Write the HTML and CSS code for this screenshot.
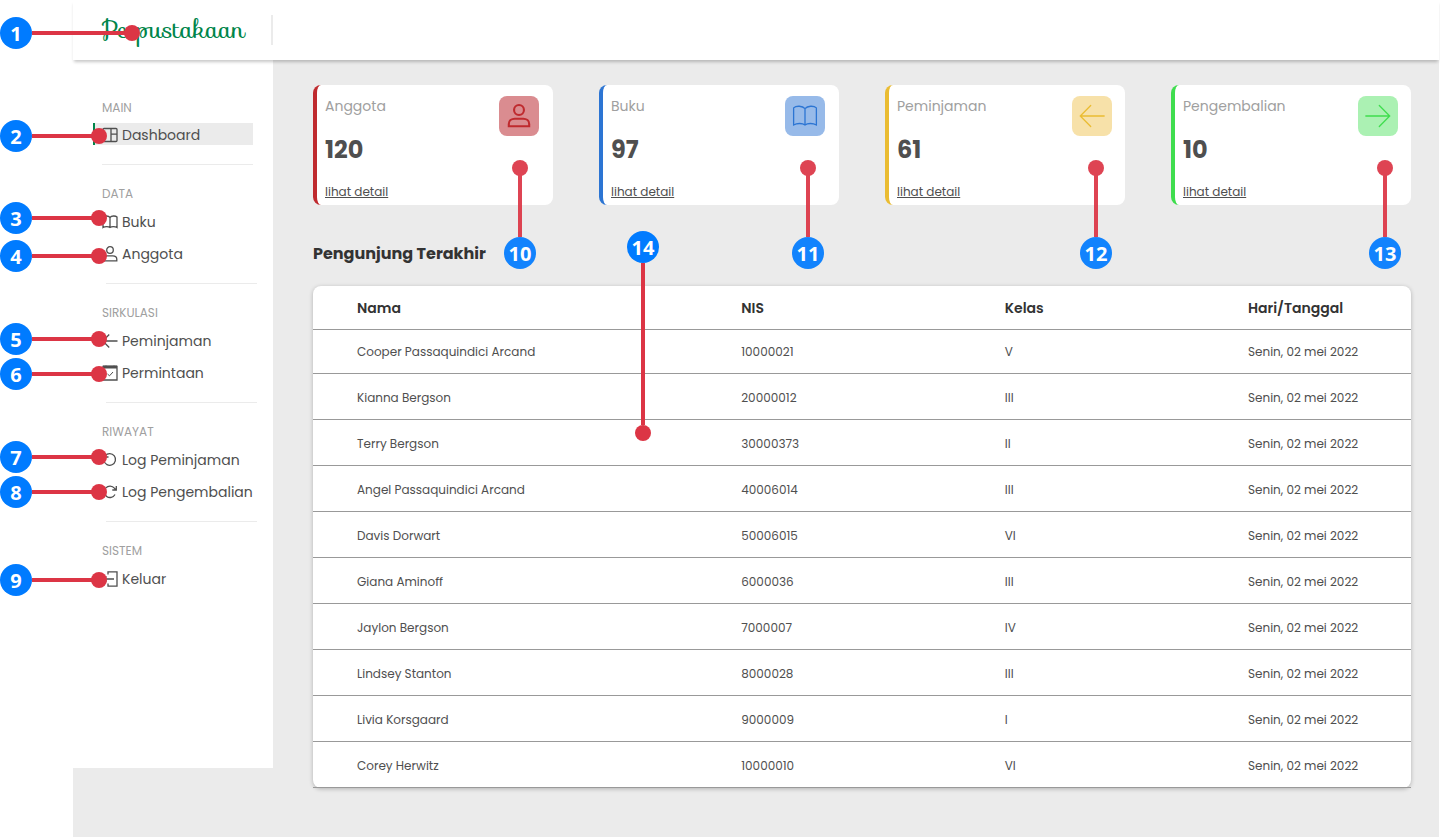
FILE: index.html
```html
<!DOCTYPE html>
<html lang="id">
<head>
<meta charset="utf-8">
<meta name="viewport" content="width=device-width, initial-scale=1">
<title>Perpustakaan</title>
<link rel="stylesheet" href="styles.css">
</head>
<body>
<svg class="sprite" aria-hidden="true">
  <symbol id="i-grid" viewBox="0 0 16 16"><rect x="1" y="1.500" width="14" height="13" rx="1"/><path d="M9 1.500v13M9 7.200h6"/></symbol>
  <symbol id="i-book" viewBox="0 0 16 16"><path d="M8 3.500C6.500 1.600 2.500 1.600 1 3v10.500c2-1.200 5.500-1.200 7 0c1.500-1.200 5-1.200 7 0V3c-1.500-1.400-5.500-1.400-7 .5zM8 3.500v10"/></symbol>
  <symbol id="i-user" viewBox="0 0 16 16"><circle cx="8" cy="4" r="3.300"/><path d="M1.200 14.800v-1.500c0-2.100 1.800-3.500 4-3.500h5.600c2.200 0 4 1.400 4 3.500v1.500z"/></symbol>
  <symbol id="i-left" viewBox="0 0 16 16"><path d="M15.500 8H.8M7.200 1.500L.8 8l6.400 6.500"/></symbol>
  <symbol id="i-right" viewBox="0 0 16 16"><path d="M.5 8h14.700M8.800 1.500L15.200 8l-6.400 6.500"/></symbol>
  <symbol id="i-calendar" viewBox="0 0 16 16"><path d="M1 1.500h14v13.500H1zM4 .5v2M12 .5v2"/><path d="M1 2h14" stroke-width="3"/><path d="M5.500 9l2 1.800L11 7" stroke-width="1"/></symbol>
  <symbol id="i-undo" viewBox="0 0 16 16"><path d="M3.200 3.800A5.800 5.800 0 1 1 2 8.500M2.500 1v4h4"/></symbol>
  <symbol id="i-redo" viewBox="0 0 16 16"><path d="M13 10.500a5.700 5.700 0 1 1-.6-6.300L13.600 5.600M14.300 2v4h-4"/></symbol>
  <symbol id="i-exit" viewBox="0 0 16 16"><path d="M6 3.500V.8h9v14.400H6v-2.700M12 8H2M4.500 5.500L2 8l2.500 2.500"/></symbol>
</svg>

<div class="app">
  <header class="topbar">
    <a class="brand" href="#">Perpustakaan</a>
  </header>
  <div class="layout">
    <nav class="sidebar" aria-label="Menu utama">
      <section class="group group-main">
        <h2 class="group-title">MAIN</h2>
        <a class="item active" href="#"><svg class="icon"><use href="#i-grid"/></svg>Dashboard</a>
      </section>
      <section class="group">
        <h2 class="group-title">DATA</h2>
        <a class="item" href="#"><svg class="icon"><use href="#i-book"/></svg>Buku</a>
        <a class="item" href="#"><svg class="icon"><use href="#i-user"/></svg>Anggota</a>
      </section>
      <section class="group">
        <h2 class="group-title">SIRKULASI</h2>
        <a class="item" href="#"><svg class="icon"><use href="#i-left"/></svg>Peminjaman</a>
        <a class="item" href="#"><svg class="icon"><use href="#i-calendar"/></svg>Permintaan</a>
      </section>
      <section class="group">
        <h2 class="group-title">RIWAYAT</h2>
        <a class="item" href="#"><svg class="icon"><use href="#i-undo"/></svg>Log Peminjaman</a>
        <a class="item" href="#"><svg class="icon"><use href="#i-redo"/></svg>Log Pengembalian</a>
      </section>
      <section class="group">
        <h2 class="group-title">SISTEM</h2>
        <a class="item" href="#"><svg class="icon"><use href="#i-exit"/></svg>Keluar</a>
      </section>
    </nav>

    <main class="content">
      <div class="cards">
        <article class="card red">
          <div class="card-text"><h3 class="card-label">Anggota</h3><p class="card-value">120</p><a class="card-link" href="#">lihat detail</a></div>
          <span class="tile"><svg class="tile-icon bold"><use href="#i-user"/></svg></span>
        </article>
        <article class="card blue">
          <div class="card-text"><h3 class="card-label">Buku</h3><p class="card-value">97</p><a class="card-link" href="#">lihat detail</a></div>
          <span class="tile"><svg class="tile-icon"><use href="#i-book"/></svg></span>
        </article>
        <article class="card yellow">
          <div class="card-text"><h3 class="card-label">Peminjaman</h3><p class="card-value">61</p><a class="card-link" href="#">lihat detail</a></div>
          <span class="tile"><svg class="tile-icon"><use href="#i-left"/></svg></span>
        </article>
        <article class="card green">
          <div class="card-text"><h3 class="card-label">Pengembalian</h3><p class="card-value">10</p><a class="card-link" href="#">lihat detail</a></div>
          <span class="tile"><svg class="tile-icon"><use href="#i-right"/></svg></span>
        </article>
      </div>

      <h1 class="heading">Pengunjung Terakhir</h1>
      <table class="visitors">
        <thead><tr><th class="col-name">Nama</th><th class="col-nis">NIS</th><th class="col-class">Kelas</th><th class="col-date">Hari/Tanggal</th></tr></thead>
        <tbody>
          <tr><td>Cooper Passaquindici Arcand</td><td>10000021</td><td>V</td><td>Senin, 02 mei 2022</td></tr>
          <tr><td>Kianna Bergson</td><td>20000012</td><td>III</td><td>Senin, 02 mei 2022</td></tr>
          <tr><td>Terry Bergson</td><td>30000373</td><td>II</td><td>Senin, 02 mei 2022</td></tr>
          <tr><td>Angel Passaquindici Arcand</td><td>40006014</td><td>III</td><td>Senin, 02 mei 2022</td></tr>
          <tr><td>Davis Dorwart</td><td>50006015</td><td>VI</td><td>Senin, 02 mei 2022</td></tr>
          <tr><td>Giana Aminoff</td><td>6000036</td><td>III</td><td>Senin, 02 mei 2022</td></tr>
          <tr><td>Jaylon Bergson</td><td>7000007</td><td>IV</td><td>Senin, 02 mei 2022</td></tr>
          <tr><td>Lindsey Stanton</td><td>8000028</td><td>III</td><td>Senin, 02 mei 2022</td></tr>
          <tr><td>Livia Korsgaard</td><td>9000009</td><td>I</td><td>Senin, 02 mei 2022</td></tr>
          <tr><td>Corey Herwitz</td><td>10000010</td><td>VI</td><td>Senin, 02 mei 2022</td></tr>
        </tbody>
      </table>
    </main>
  </div>
</div>

<div class="callouts">
  <div class="pin side p1"><b class="num">1</b></div>
  <div class="pin side p2"><b class="num">2</b></div>
  <div class="pin side p3"><b class="num">3</b></div>
  <div class="pin side p4"><b class="num">4</b></div>
  <div class="pin side p5"><b class="num">5</b></div>
  <div class="pin side p6"><b class="num">6</b></div>
  <div class="pin side p7"><b class="num">7</b></div>
  <div class="pin side p8"><b class="num">8</b></div>
  <div class="pin side p9"><b class="num">9</b></div>
  <div class="pin up p10"><b class="num">10</b></div>
  <div class="pin up p11"><b class="num">11</b></div>
  <div class="pin up p12"><b class="num">12</b></div>
  <div class="pin up p13"><b class="num">13</b></div>
  <div class="pin down p14"><b class="num">14</b></div>
</div>
</body>
</html>
```

FILE: styles.css
```css
* { box-sizing: border-box; }
body {
  margin: 0;
  background: #fff;
  color: #4f4f4f;
  font-family: Poppins, Inter, "Open Sans", sans-serif;
  position: relative;
}
h1, h2, h3, p { margin: 0; }
a { color: inherit; text-decoration: none; }
.sprite { display: none; }

.app {
  margin: 0 1px 0 73px;
  min-height: 100vh;
  background: #ebebeb;
}
.topbar {
  position: relative;
  display: flex;
  align-items: center;
  height: 60px;
  background: #fff;
  box-shadow: 0 3px 3px -1px rgba(0, 0, 0, .22);
}
.brand {
  display: flex;
  align-items: center;
  width: 200px;
  height: 30px;
  padding-left: 29px;
  border-right: 2px solid #ebebeb;
  color: #00854a;
  font-family: Sofia, "Dancing Script", "Liberation Serif", cursive;
  font-size: 24px;
  line-height: 28px;
}
.layout { display: flex; align-items: flex-start; }

.sidebar {
  flex: none;
  width: 200px;
  min-height: 708px;
  padding: 39px 20px 0;
  background: #fff;
}
.group {
  display: flex;
  flex-direction: column;
  gap: 10px;
}
.group-title {
  margin: 0 0 -2px 9px;
  color: #a0a0a0;
  font-size: 12px;
  font-weight: 400;
  line-height: 18px;
}
.group-main .group-title { margin-bottom: -4px; }
.group:not(:last-child)::after {
  content: "";
  height: 1px;
  margin: 8px -4px 20px 13px;
  background: #ebebeb;
}
.group-main:not(:last-child)::after { margin: 9px 0 20px 9px; }
.item {
  display: flex;
  align-items: center;
  gap: 4px;
  height: 22px;
  padding-left: 7px;
  border-left: 2px solid transparent;
  font-size: 14px;
  white-space: nowrap;
}
.item.active { padding-top: 2px; background: #ebebeb; border-color: #00854a; }
.icon {
  flex: none;
  width: 16px;
  height: 16px;
  fill: none;
  stroke: #4f4f4f;
  stroke-width: 1.3;
}

.content { flex: 1; padding: 25px 28px 40px 40px; }
.cards {
  display: grid;
  grid-template-columns: repeat(auto-fill, 240px);
  justify-content: space-between;
  gap: 20px;
}
.card {
  display: flex;
  justify-content: space-between;
  height: 120px;
  padding: 11px 14px 0 8px;
  border-left: 4px solid var(--tone);
  border-radius: 8px;
  background: #fff;
}
.red { --tone: #bf2a2e; --tint: #da8c90; }
.blue { --tone: #2c75d3; --tint: #97bae9; }
.yellow { --tone: #eabc32; --tint: #f7e1a9; }
.green { --tone: #3fdd4e; --tint: #abf1b3; }
.yellow, .green { padding-right: 13px; }
.card-label { color: #a0a0a0; font-size: 14px; font-weight: 400; line-height: 20px; }
.card-value { margin-top: 16px; font-size: 24px; font-weight: 700; line-height: 36px; }
.card-link {
  display: inline-block;
  margin-top: 15px;
  font-size: 12px;
  line-height: 18px;
  text-decoration: underline;
}
.tile {
  display: grid;
  place-items: center;
  width: 40px;
  height: 40px;
  border-radius: 8px;
  background: var(--tint);
}
.tile-icon { width: 26px; height: 26px; fill: none; stroke: var(--tone); stroke-width: .8; stroke-linecap: round; }
.tile-icon.bold { width: 24px; stroke-width: 1.4; }

.heading { margin: 37px 0 20px; color: #333; font-size: 16px; font-weight: 700; line-height: 24px; }
.visitors {
  width: 100%;
  table-layout: fixed;
  border-spacing: 0;
  border-radius: 8px;
  background: #fff;
  box-shadow: 0 1px 4px rgba(0, 0, 0, .25);
  font-size: 12px;
  text-align: left;
}
.visitors th, .visitors td { height: 46px; padding: 2px 0 0; border-bottom: 1px solid #999; }
.visitors th, .visitors tbody tr:first-child td { height: 44px; }
.visitors tbody tr:first-child td { padding-top: 0; }
.visitors th { color: #333; font-size: 14px; font-weight: 600; }
.visitors th:first-child, .visitors td:first-child { padding-left: 44px; }
.col-name { width: 39%; }
.col-nis { width: 24%; }
.col-date { width: 163px; }

/* Numbered callouts laid over the interface */
.pin {
  position: absolute;
  display: flex;
  align-items: center;
  justify-content: center;
  width: 32px;
  height: 32px;
  padding-top: 2px;
  border-radius: 50%;
  background: #007bff;
}
.num { color: #fff; font: 700 20px/30px "Open Sans", sans-serif; }
.pin::before, .pin::after { content: ""; position: absolute; background: #dc3545; }
.pin::after { width: 16px; height: 16px; border-radius: 50%; }
.side { left: 0; }
.side::before { left: 32px; top: 14px; width: 67px; height: 4px; }
.side::after { left: 91px; top: 8px; }
.up { top: 237px; opacity: .92; }
.up::before { left: 14px; bottom: 32px; width: 4px; height: 69px; }
.up::after { left: 8px; bottom: 93px; }
.down::before { left: 14px; top: 32px; width: 4px; height: 162px; }
.down::after { left: 8px; top: 194px; }
.p1 { top: 17px; }
.p1::before { width: 100px; }
.p1::after { left: 124px; }
.p2 { top: 120px; }
.p3 { top: 202px; }
.p4 { top: 240px; }
.p5 { top: 323px; }
.p6 { top: 358px; }
.p7 { top: 441px; }
.p8 { top: 476px; }
.p9 { top: 564px; }
.p10 { left: 504px; }
.p11 { left: 792px; }
.p12 { left: 1080px; }
.p13 { left: 1369px; }
.p14 { left: 627px; top: 231px; }
```
